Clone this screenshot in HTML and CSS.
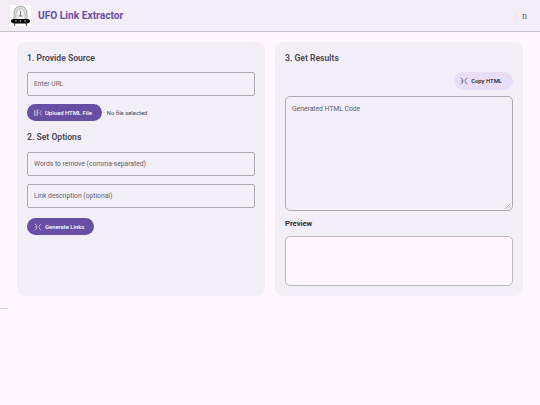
FILE: index.html
```html
<!DOCTYPE html>
<html lang="en">
<head>
    <meta charset="UTF-8">
    <meta name="viewport" content="width=device-width, initial-scale=1.0">
    <title>UFO Link Extractor</title>
    <link rel="stylesheet" href="styles.css">
</head>
<body>
    <header class="top-bar">
        <div class="brand">
            <svg class="logo" width="21" height="21" viewBox="0 0 21 21">
                <rect width="21" height="21" fill="#fff"/>
                <path d="M4 14 V8 A6.500 7 0 0 1 17 8 V14 Z" fill="#dedede" stroke="#8a8a8a" stroke-width="0.700"/>
                <path d="M6 14 V9 A4.500 5 0 0 1 15 9 V14" fill="#efefef" stroke="#a0a0a0" stroke-width="0.600"/>
                <path d="M10.500 6 V11 M8.500 11 H12.500" stroke="#555" stroke-width="0.700" fill="none"/>
                <path d="M1 16 Q1 14 4 14 H17 Q20 14 20 16 Q20 18 17 18.500 H4 Q1 18 1 16 Z" fill="#050505"/>
                <path d="M5 18 L4.500 21 M16 18 L16.500 21" stroke="#444" stroke-width="1"/>
                <circle cx="6" cy="16" r="0.700" fill="#ddd"/>
                <circle cx="10.500" cy="16" r="0.700" fill="#ddd"/>
                <circle cx="15" cy="16" r="0.700" fill="#ddd"/>
            </svg>
            <h1>UFO Link Extractor</h1>
        </div>
        <div class="theme-toggle"><span class="dot">:</span>n</div>
    </header>

    <main class="columns">
        <section class="card">
            <h2>1. Provide Source</h2>
            <div class="field">Enter URL</div>
            <div class="file-row">
                <button class="btn btn-filled">
                    <svg class="icon" viewBox="0 0 8 8"><path d="M.5 1V7M2 1V7M3.500 7V1H5M3.500 4H4.800M7.500 1.500 5.800 4 7.500 6.500" /></svg>
                    Upload HTML File
                </button>
                <span class="file-name">No file selected</span>
            </div>
            <h2 class="second">2. Set Options</h2>
            <div class="field">Words to remove (comma-separated)</div>
            <div class="field">Link description (optional)</div>
            <button class="btn btn-filled btn-generate">
                <svg class="icon" viewBox="0 0 8 8"><path d="M.5 1Q3 1.500 3 4T.5 7M7.500 1Q5 1.500 5 4T7.500 7M.8 4H3" /></svg>
                Generate Links
            </button>
        </section>

        <section class="card">
            <h2>3. Get Results</h2>
            <div class="copy-row">
                <button class="btn btn-tonal">
                    <svg class="icon" viewBox="0 0 8 8"><path d="M.5 1Q3 1.500 3 4T.5 7M7.500 1Q5 1.500 5 4T7.500 7M.8 4H3" /></svg>
                    Copy HTML
                </button>
            </div>
            <div class="field code-area">
                Generated HTML Code
                <svg class="grip" width="6" height="6" viewBox="0 0 6 6"><path d="M0.500 5.500 5.500 0.500M3 5.500 5.500 3" /></svg>
            </div>
            <h3>Preview</h3>
            <div class="preview"></div>
        </section>
    </main>

    <div class="stray">~~~</div>
</body>
</html>
```

FILE: styles.css
```css
body {
    margin: 0;
    background-color: #fef7ff;
    color: #49454f;
    font-family: Roboto, "Liberation Sans", sans-serif;
}

.top-bar {
    display: flex;
    justify-content: space-between;
    align-items: center;
    height: 31px;
    padding: 0 13px 0 10px;
    background-color: #f3edf7;
    border-bottom: 1px solid #c4c0c9;
}

.brand {
    display: flex;
    align-items: center;
    gap: 7px;
}

.logo {
    display: block;
}

h1 {
    margin: 0;
    font-size: 10.200px;
    font-weight: 700;
    color: #6750a4;
}

.theme-toggle {
    font-family: "Liberation Serif", serif;
    font-size: 10px;
    color: #5c5864;
}

.dot {
    margin-right: 5px;
    color: #ddd8e4;
}

.columns {
    display: grid;
    grid-template-columns: 248px 248px;
    gap: 10px;
    padding: 10px 17px;
}

.card {
    height: 254px;
    box-sizing: border-box;
    padding: 10px;
    background-color: #f3eff8;
    border-radius: 8px;
}

h2 {
    margin: 0 0 8px 0;
    height: 12px;
    line-height: 12px;
    font-size: 8.600px;
    font-weight: 600;
    color: #49454f;
}

h2.second {
    margin-top: 10px;
    margin-bottom: 9px;
}

h3 {
    margin: 7px 0 6px 0;
    height: 12px;
    line-height: 12px;
    font-size: 7.600px;
    font-weight: 700;
    color: #302d35;
}

.field {
    box-sizing: border-box;
    height: 24px;
    margin-bottom: 8px;
    padding: 0 6px;
    line-height: 22px;
    font-size: 6.750px;
    color: #625e69;
    border: 1px solid #aeaab4;
    border-radius: 2px;
}

.file-row {
    display: flex;
    align-items: center;
    gap: 5px;
}

.file-name {
    font-size: 5.900px;
    color: #49454f;
}

.btn {
    display: inline-flex;
    align-items: center;
    gap: 3px;
    height: 17px;
    padding: 0 10px 0 7px;
    border: none;
    border-radius: 9px;
    font-family: inherit;
    font-size: 5.900px;
    font-weight: 500;
}

.btn-filled {
    background-color: #6750a4;
    color: #fff;
}

.btn-generate {
    display: flex;
    margin-top: 10px;
}

.btn-tonal {
    height: 18px;
    padding: 0 11px 0 6px;
    background-color: #e8def8;
    color: #1d192b;
}

.icon {
    width: 8px;
    height: 8px;
    fill: none;
    stroke: currentColor;
    stroke-width: 0.600;
    opacity: 0.800;
}

.copy-row {
    display: flex;
    justify-content: flex-end;
    margin-bottom: 6px;
}

.code-area {
    position: relative;
    height: 115px;
    margin-bottom: 0;
    padding-top: 1px;
    border-radius: 5px;
}

.grip {
    position: absolute;
    right: 1px;
    bottom: 1px;
    fill: none;
    stroke: #8a8690;
    stroke-width: 0.600;
}

.preview {
    box-sizing: border-box;
    height: 50px;
    background-color: #fef7ff;
    border: 1px solid #bcb8c2;
    border-radius: 5px;
}

.stray {
    height: 4px;
    line-height: 4px;
    font-size: 4px;
    color: #777;
}
```
